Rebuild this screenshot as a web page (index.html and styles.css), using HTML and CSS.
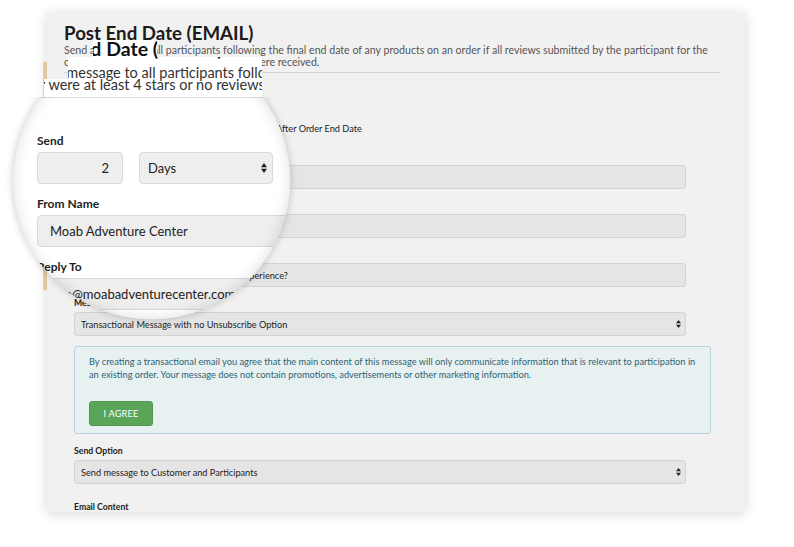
FILE: index.html
```html
<!DOCTYPE html>
<html lang="en">
<head>
    <meta charset="UTF-8">
    <title>Post End Date (EMAIL)</title>
    <link rel="stylesheet" href="styles.css">
</head>
<body>
<div class="stage">
    <div class="backcard"></div>

    <section class="panel">
        <h1 class="title">Post End Date (EMAIL)</h1>
        <p class="desc">Send a message to all participants following the final end date of any products on an order if all reviews submitted by the participant for the<br>order were at least 4 stars or no reviews were received.</p>
        <div class="rule"></div>

        <div class="form">
            <div class="field">
                <div class="label">Send</div>
                <div class="send-row">
                    <div class="input num">2</div>
                    <div class="input select days"><span>Days</span>
                        <svg class="arrows" width="5" height="8" viewBox="0 0 5 8"><path d="M0 3.3L2.5 0L5 3.3Z M0 4.7H5L2.5 8Z" fill="#222"/></svg>
                    </div>
                    <span class="after">After Order End Date</span>
                </div>
            </div>
            <div class="field">
                <div class="label">From Name</div>
                <div class="input">Moab Adventure Center</div>
            </div>
            <div class="field">
                <div class="label">Reply To</div>
                <div class="input">info@moabadventurecenter.com</div>
            </div>
            <div class="field">
                <div class="label">Subject</div>
                <div class="input">How was your Moab Adventure Center experience?</div>
            </div>
            <div class="field">
                <div class="label">Message Type</div>
                <div class="input select"><span>Transactional Message with no Unsubscribe Option</span>
                    <svg class="arrows" width="5" height="8" viewBox="0 0 5 8"><path d="M0 3.3L2.5 0L5 3.3Z M0 4.7H5L2.5 8Z" fill="#222"/></svg>
                </div>
            </div>

            <div class="notice">
                <p>By creating a transactional email you agree that the main content of this message will only communicate information that is relevant to participation in<br>an existing order. Your message does not contain promotions, advertisements or other marketing information.</p>
                <button class="agree">I AGREE</button>
            </div>

            <div class="field">
                <div class="label">Send Option</div>
                <div class="input select"><span>Send message to Customer and Participants</span>
                    <svg class="arrows" width="5" height="8" viewBox="0 0 5 8"><path d="M0 3.3L2.5 0L5 3.3Z M0 4.7H5L2.5 8Z" fill="#222"/></svg>
                </div>
            </div>
            <div class="field email-content">
                <div class="label">Email Content</div>
            </div>
        </div>
    </section>

    <!-- magnifier lens -->
    <div class="zoom">
        <h2 class="z-title">Post End Date (EMAIL)</h2>
        <p class="z-desc">
            <span class="z-line1">Send a message to all participants following the final end date</span>
            <span class="z-line2">order were at least 4 stars or no reviews were received.</span>
        </p>
        <div class="z-rule"></div>
        <div class="z-form">
            <div class="z-field">
                <div class="z-label">Send</div>
                <div class="z-row">
                    <div class="z-input z-num">2</div>
                    <div class="z-input z-days"><span>Days</span>
                        <svg width="6" height="10" viewBox="0 0 6 10"><path d="M0 4.2L3 0L6 4.2Z M0 5.8H6L3 10Z" fill="#222"/></svg>
                    </div>
                </div>
            </div>
            <div class="z-field">
                <div class="z-label">From Name</div>
                <div class="z-input z-wide">Moab Adventure Center</div>
            </div>
            <div class="z-field">
                <div class="z-label">Reply To</div>
                <div class="z-input z-wide">info@moabadventurecenter.com</div>
            </div>
        </div>
    </div>
    <div class="zoom-ring"></div>
</div>
</body>
</html>
```

FILE: styles.css
```css
body {
    margin: 0;
    background: #fff;
    font-family: Lato, "Open Sans", sans-serif;
    color: #222;
}
.stage {
    position: relative;
    width: 794px;
    height: 547px;
    overflow: hidden;
    padding: 12px 0 0 47px;
    box-sizing: border-box;
}
.backcard {
    position: absolute;
    left: 43px;
    top: 62px;
    width: 12px;
    height: 228px;
    background: #f3d4aa;
}
.panel {
    position: relative;
    z-index: 1;
    width: 698px;
    height: 500px;
    box-sizing: border-box;
    padding: 10px 25px 0 17px;
    background: #f1f1f1;
    box-shadow: 0 2px 12px rgba(0, 0, 0, 0.16);
    overflow: hidden;
}
.title {
    margin: 0;
    font-size: 18.7px;
    line-height: 22px;
    font-weight: 700;
    color: #1b1b1b;
}
.desc {
    margin: 0;
    font-size: 10.6px;
    line-height: 12px;
    color: #555;
    white-space: nowrap;
}
.rule {
    margin-top: 4px;
    border-top: 1px solid #d3d3d3;
}
.form {
    padding-left: 10px;
    margin-top: 28px;
}
.field {
    margin-bottom: 10px;
}
.label {
    font-size: 8.7px;
    line-height: 12px;
    font-weight: 700;
    color: #222;
    margin-bottom: 3px;
}
.input {
    display: flex;
    align-items: center;
    width: 612px;
    height: 24px;
    box-sizing: border-box;
    padding: 0 6px;
    background: #e5e5e5;
    border: 1px solid #d3d3d3;
    border-radius: 3px;
    font-size: 9.2px;
    color: #222;
    white-space: nowrap;
}
.select {
    justify-content: space-between;
    padding-right: 4px;
}
.send-row {
    display: flex;
    align-items: center;
    gap: 12px;
}
.input.num {
    width: 66px;
    justify-content: flex-end;
}
.input.days {
    width: 103px;
}
.after {
    margin-left: 9px;
    font-size: 9.2px;
    color: #222;
}
.notice {
    width: 637px;
    box-sizing: border-box;
    margin: 0 0 11px;
    padding: 8px 14px 7px;
    background: #e8f1f1;
    border: 1px solid #b7d4dc;
    border-radius: 3px;
}
.notice p {
    margin: 0 0 20px;
    font-size: 9.25px;
    line-height: 13px;
    color: #2d6373;
    white-space: nowrap;
}
.agree {
    display: block;
    width: 64px;
    height: 25px;
    padding: 0;
    background: #5ba55b;
    border: 1px solid #4f964f;
    border-radius: 3px;
    color: #fff;
    font-family: Lato, sans-serif;
    font-size: 9.2px;
    letter-spacing: 0.2px;
}
.email-content {
    margin-top: 17px;
}

/* magnifier */
.zoom {
    position: absolute;
    z-index: 2;
    left: 0;
    top: 0;
    width: 300px;
    height: 330px;
    box-sizing: border-box;
    padding-top: 30px;
    background: #fff;
    overflow: hidden;
    clip-path: path('M93 40V58H157V40Z M68 57V80H262V57Z M44 79V99H262V79Z M40.5 97A139 139 0 1 0 262.5 97Z');
}
.z-title {
    margin: 0 0 0 25px;
    font-size: 19.5px;
    line-height: 37px;
    font-weight: 700;
    color: #111;
    white-space: nowrap;
}
.z-desc {
    margin: 0;
    font-size: 14.5px;
    line-height: 12px;
    color: #333;
    white-space: nowrap;
}
.z-line1,
.z-line2 {
    display: block;
}
.z-line1 {
    margin-left: 20px;
}
.z-line2 {
    margin-left: 11px;
}
.z-rule {
    margin-top: 6px;
    border-top: 1px solid #dadada;
}
.z-form {
    margin-top: 35px;
    padding-left: 37px;
}
.z-field {
    margin-bottom: 12px;
}
.z-label {
    font-size: 12px;
    line-height: 16px;
    font-weight: 700;
    color: #1e1e1e;
    margin-bottom: 3px;
}
.z-row {
    display: flex;
    gap: 16px;
}
.z-input {
    display: flex;
    align-items: center;
    height: 32px;
    box-sizing: border-box;
    background: #eeeeee;
    border: 1px solid #d9d9d9;
    border-radius: 4px;
    font-size: 13px;
    color: #222;
    white-space: nowrap;
}
.z-num {
    width: 86px;
    justify-content: flex-end;
    padding-right: 13px;
}
.z-days {
    width: 134px;
    justify-content: space-between;
    padding: 0 5px 0 8px;
}
.z-wide {
    width: 420px;
    padding-left: 12px;
}
.zoom-ring {
    position: absolute;
    z-index: 3;
    left: 12px;
    top: 41px;
    width: 279px;
    height: 279px;
    box-sizing: border-box;
    border-radius: 50%;
    border: 1px solid rgba(0, 0, 0, 0.1);
    box-shadow: 0 0 7px rgba(0, 0, 0, 0.18), inset 0 0 14px rgba(0, 0, 0, 0.13);
    clip-path: inset(56px -20px -20px -20px);
}
```
